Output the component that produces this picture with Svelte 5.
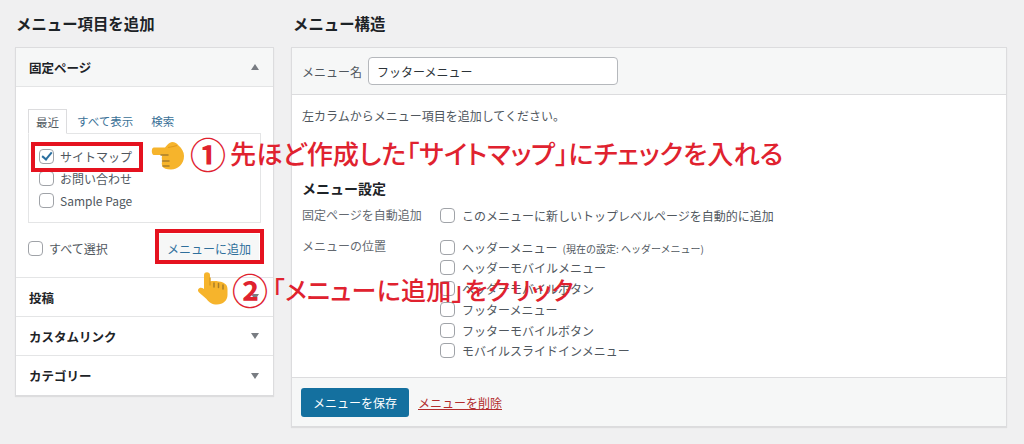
<script>
  const locations = [
    { name: "ヘッダーメニュー", note: "(現在の設定: ヘッダーメニュー)" },
    { name: "ヘッダーモバイルメニュー" },
    { name: "ヘッダーモバイルボタン" },
    { name: "フッターメニュー" },
    { name: "フッターモバイルボタン" },
    { name: "モバイルスライドインメニュー" }
  ];
  const pages = [
    { name: "サイトマップ", checked: true },
    { name: "お問い合わせ", checked: false },
    { name: "Sample Page", checked: false }
  ];
</script>

<div class="page">
  <section class="col-left">
    <h2>メニュー項目を追加</h2>
    <div class="panel">
      <div class="acc-head open">
        <h3>固定ページ</h3>
        <span class="arrow up"></span>
      </div>
      <div class="acc-body">
        <div class="tabs">
          <span class="tab active">最近</span>
          <span class="tab">すべて表示</span>
          <span class="tab">検索</span>
        </div>
        <div class="tab-panel">
          {#each pages as p}
            <label class="check-row">
              <input type="checkbox" checked={p.checked} />
              <span>{p.name}</span>
            </label>
          {/each}
        </div>
        <div class="add-row">
          <label class="check-row">
            <input type="checkbox" />
            <span>すべて選択</span>
          </label>
          <button class="add-btn">メニューに追加</button>
        </div>
      </div>
      <div class="acc-head"><h3>投稿</h3><span class="arrow"></span></div>
      <div class="acc-head"><h3>カスタムリンク</h3><span class="arrow"></span></div>
      <div class="acc-head last"><h3>カテゴリー</h3><span class="arrow"></span></div>
    </div>
  </section>

  <section class="col-right">
    <h2>メニュー構造</h2>
    <div class="panel">
      <div class="name-bar">
        <span>メニュー名</span>
        <input class="name-input" type="text" value="フッターメニュー" />
      </div>
      <div class="menu-body">
        <p class="hint">左カラムからメニュー項目を追加してください。</p>
        <h3 class="settings-title">メニュー設定</h3>
        <div class="setting auto">
          <div class="setting-label">固定ページを自動追加</div>
          <label class="check-row">
            <input type="checkbox" />
            <span>このメニューに新しいトップレベルページを自動的に追加</span>
          </label>
        </div>
        <div class="setting">
          <div class="setting-label">メニューの位置</div>
          <div class="locations">
            {#each locations as loc}
              <label class="check-row">
                <input type="checkbox" />
                <span>{loc.name}{#if loc.note}<small>{loc.note}</small>{/if}</span>
              </label>
            {/each}
          </div>
        </div>
      </div>
      <div class="menu-foot">
        <button class="save">メニューを保存</button>
        <a class="delete" href="#delete">メニューを削除</a>
      </div>
    </div>
  </section>

  <!-- annotations drawn over the screenshot -->
  <div class="red-box box-one"></div>
  <div class="red-box box-two"></div>

  <svg class="hand hand-right" viewBox="0 0 34 30" aria-hidden="true">
    <path d="M3 6.5 H14 C16 4 18 1.5 21 1 C24 1 26 2.5 27.5 4.5 C31 7.5 33 11 33 15 C33 23 27 28.5 20 28.5 C15.5 28.5 12.5 27.5 11.5 25.5 C10.5 23.5 10.5 21.5 11.5 20 C10.5 18 10.5 16 11.5 14 H3 C1.5 14 0.8 12 0.8 10.2 C0.8 8.2 1.5 6.5 3 6.5 Z" fill="#f6b42c"/>
    <path d="M10 14 H17 M11.5 20 H18 M12 25 H18" stroke="#a97d2a" stroke-width="1.5" fill="none" stroke-linecap="round"/>
    <path d="M17 6.5 C20 6 23 5.5 26 4.5" stroke="#e09a1e" stroke-width="1.2" fill="none"/>
  </svg>
  <svg class="hand hand-up" viewBox="0 0 32 33" aria-hidden="true">
    <path d="M7 3 C7 1 8.5 0.3 10 0.3 C11.6 0.3 13 1.2 13 3 V9.5 C16 8.6 22 9 26 10.5 C29 11.8 30.5 14 30.5 17 V23 C30.5 28.5 26 32.5 20 32.5 C15 32.5 12 30.5 9.5 27 C7 24.5 4 22.5 1.6 20 C0.4 18.5 1 16.5 2.6 16 C4 15.4 5.6 16 7 17 Z" fill="#f6b42c"/>
    <path d="M17 11 V15 M21.5 11.5 V15.5 M26 13 V17" stroke="#a97d2a" stroke-width="1.5" fill="none" stroke-linecap="round"/>
    <path d="M13 6 V13" stroke="#d99a22" stroke-width="1.4" fill="none" stroke-linecap="round"/>
  </svg>

  <div class="note note-one"><span class="num">①</span>先ほど作成した「サイトマップ」にチェックを入れる</div>
  <div class="note note-two"><span class="num">②</span>「メニューに追加」をクリック</div>
</div>

<style>
  :global(body) {
    margin: 0;
    background: #f0f0f1;
    font-family: "Noto Sans CJK JP", "Noto Sans", sans-serif;
  }

  .page {
    position: relative;
    width: 1024px;
    height: 444px;
    overflow: hidden;
    display: flex;
    gap: 17px;
    padding: 0 17px 0 15px;
    box-sizing: border-box;
    color: #50575e;
    font-size: 12px;
  }

  .col-left {
    width: 259px;
    flex: none;
  }

  .col-right {
    flex: 1;
  }

  h2 {
    margin: 0;
    height: 47px;
    line-height: 46px;
    padding-left: 1px;
    font-size: 15.4px;
    font-weight: 700;
    color: #1d2327;
  }

  .col-right h2 {
    padding-left: 2px;
  }

  .panel {
    background: #fff;
    border: 1px solid #dcdcde;
    box-shadow: 0 1px 1px rgba(0, 0, 0, 0.08);
  }

  .acc-head {
    height: 39px;
    padding: 0 14px 0 13px;
    display: flex;
    align-items: center;
    justify-content: space-between;
    border-bottom: 1px solid #e4e5e6;
    box-sizing: border-box;
  }

  .acc-head.open {
    background: #f6f7f7;
  }

  .acc-head.last {
    border-bottom: none;
  }

  h3 {
    margin: 0;
    font-size: 12.5px;
    font-weight: 700;
    color: #1d2327;
  }

  .arrow {
    width: 0;
    height: 0;
    border-left: 4px solid transparent;
    border-right: 4px solid transparent;
    border-top: 6px solid #787c82;
  }

  .arrow.up {
    border-top: none;
    border-bottom: 6px solid #787c82;
  }

  .acc-body {
    padding: 22px 12px 0;
    height: 191px;
    box-sizing: border-box;
    border-bottom: 1px solid #e4e5e6;
  }

  .tabs {
    display: flex;
    height: 25px;
    margin-bottom: -1px;
    position: relative;
  }

  .tab {
    padding: 0 8px 0 10px;
    line-height: 24px;
    color: #3a7197;
    font-size: 11.5px;
  }

  .tab.active {
    padding: 0 7px;
    color: #50575e;
    background: #fff;
    border: 1px solid #dcdcde;
    border-bottom-color: #fff;
  }

  .tab-panel {
    height: 90px;
    box-sizing: border-box;
    border: 1px solid #e4e5e6;
    padding: 13px 10px 0;
    display: flex;
    flex-direction: column;
    gap: 4px;
  }

  .check-row {
    display: flex;
    align-items: center;
    gap: 6px;
    height: 18px;
    white-space: nowrap;
    font-size: 12px;
    color: #50575e;
  }

  .col-right .check-row {
    gap: 7px;
  }

  input[type="checkbox"] {
    appearance: none;
    flex: none;
    width: 15px;
    height: 15px;
    margin: 0;
    background: #fff;
    border: 1px solid #a0a3a8;
    border-radius: 4px;
    box-sizing: border-box;
    position: relative;
  }

  input[type="checkbox"]:checked::after {
    content: "";
    position: absolute;
    left: 4px;
    top: 0.5px;
    width: 4px;
    height: 8px;
    border: solid #2a6f9f;
    border-width: 0 2.4px 2.4px 0;
    transform: rotate(40deg);
  }

  .add-row {
    display: flex;
    align-items: center;
    justify-content: space-between;
    height: 34px;
    margin-top: 8px;
    padding-right: 2px;
  }

  .add-btn {
    width: 100px;
    height: 28px;
    padding: 0;
    border: none;
    background: #f6f7f7;
    color: #2f6f9c;
    font: inherit;
    font-size: 12px;
  }

  .name-bar {
    height: 47px;
    padding: 0 10px;
    display: flex;
    align-items: center;
    gap: 6px;
    background: #f6f7f7;
    border-bottom: 1px solid #dcdcde;
    box-sizing: border-box;
  }

  .name-input {
    width: 250px;
    height: 28px;
    box-sizing: border-box;
    padding: 0 8px;
    border: 1px solid #b5b8bc;
    border-radius: 4px;
    background: #fff;
    color: #2c3338;
    font: inherit;
    font-size: 12px;
  }

  .menu-body {
    height: 282px;
    padding: 0 10px;
    box-sizing: border-box;
  }

  .hint {
    margin: 0;
    padding-top: 12px;
    height: 66px;
    line-height: 18px;
    font-size: 12px;
    color: #50575e;
  }

  .settings-title {
    font-size: 14px;
    line-height: 20px;
    padding-top: 5px;
    margin-bottom: 8px;
  }

  .setting {
    display: flex;
  }

  .setting.auto {
    margin-bottom: 13px;
  }

  .setting-label {
    width: 138px;
    flex: none;
    font-size: 12px;
    line-height: 18px;
    color: #646970;
  }

  .locations {
    display: flex;
    flex-direction: column;
    gap: 2.8px;
    margin-top: 1px;
  }

  .check-row small {
    font-size: 10px;
    margin-left: 5px;
  }

  .menu-foot {
    height: 49px;
    padding: 0 9px;
    display: flex;
    align-items: center;
    gap: 9px;
    background: #f6f7f7;
    border-top: 1px solid #dcdcde;
    box-sizing: border-box;
  }

  .save {
    width: 108px;
    height: 29px;
    padding: 0;
    border: none;
    border-radius: 3px;
    background: #14709f;
    color: #fff;
    font: inherit;
    font-size: 12px;
  }

  .delete {
    color: #b32d2e;
    font-size: 12px;
  }

  .red-box {
    position: absolute;
    box-sizing: border-box;
    border: 4px solid #e5121f;
  }

  .box-one {
    left: 31px;
    top: 142px;
    width: 112px;
    height: 30px;
  }

  .box-two {
    left: 155px;
    top: 229px;
    width: 109px;
    height: 35px;
  }

  .hand {
    position: absolute;
  }

  .hand-right {
    left: 151px;
    top: 141px;
    width: 34px;
    height: 30px;
  }

  .hand-up {
    left: 197px;
    top: 272px;
    width: 32px;
    height: 33px;
  }

  .note {
    position: absolute;
    display: flex;
    align-items: center;
    white-space: nowrap;
    color: #e0222f;
    line-height: 34px;
    font-weight: 500;
    font-feature-settings: "palt";
  }

  .num {
    font-size: 36px;
    width: 40px;
    font-weight: 700;
  }

  .note-one {
    left: 190px;
    top: 136px;
    font-size: 26.2px;
  }

  .note-two {
    left: 232px;
    top: 272px;
    font-size: 25px;
    letter-spacing: 0.3px;
  }
</style>
